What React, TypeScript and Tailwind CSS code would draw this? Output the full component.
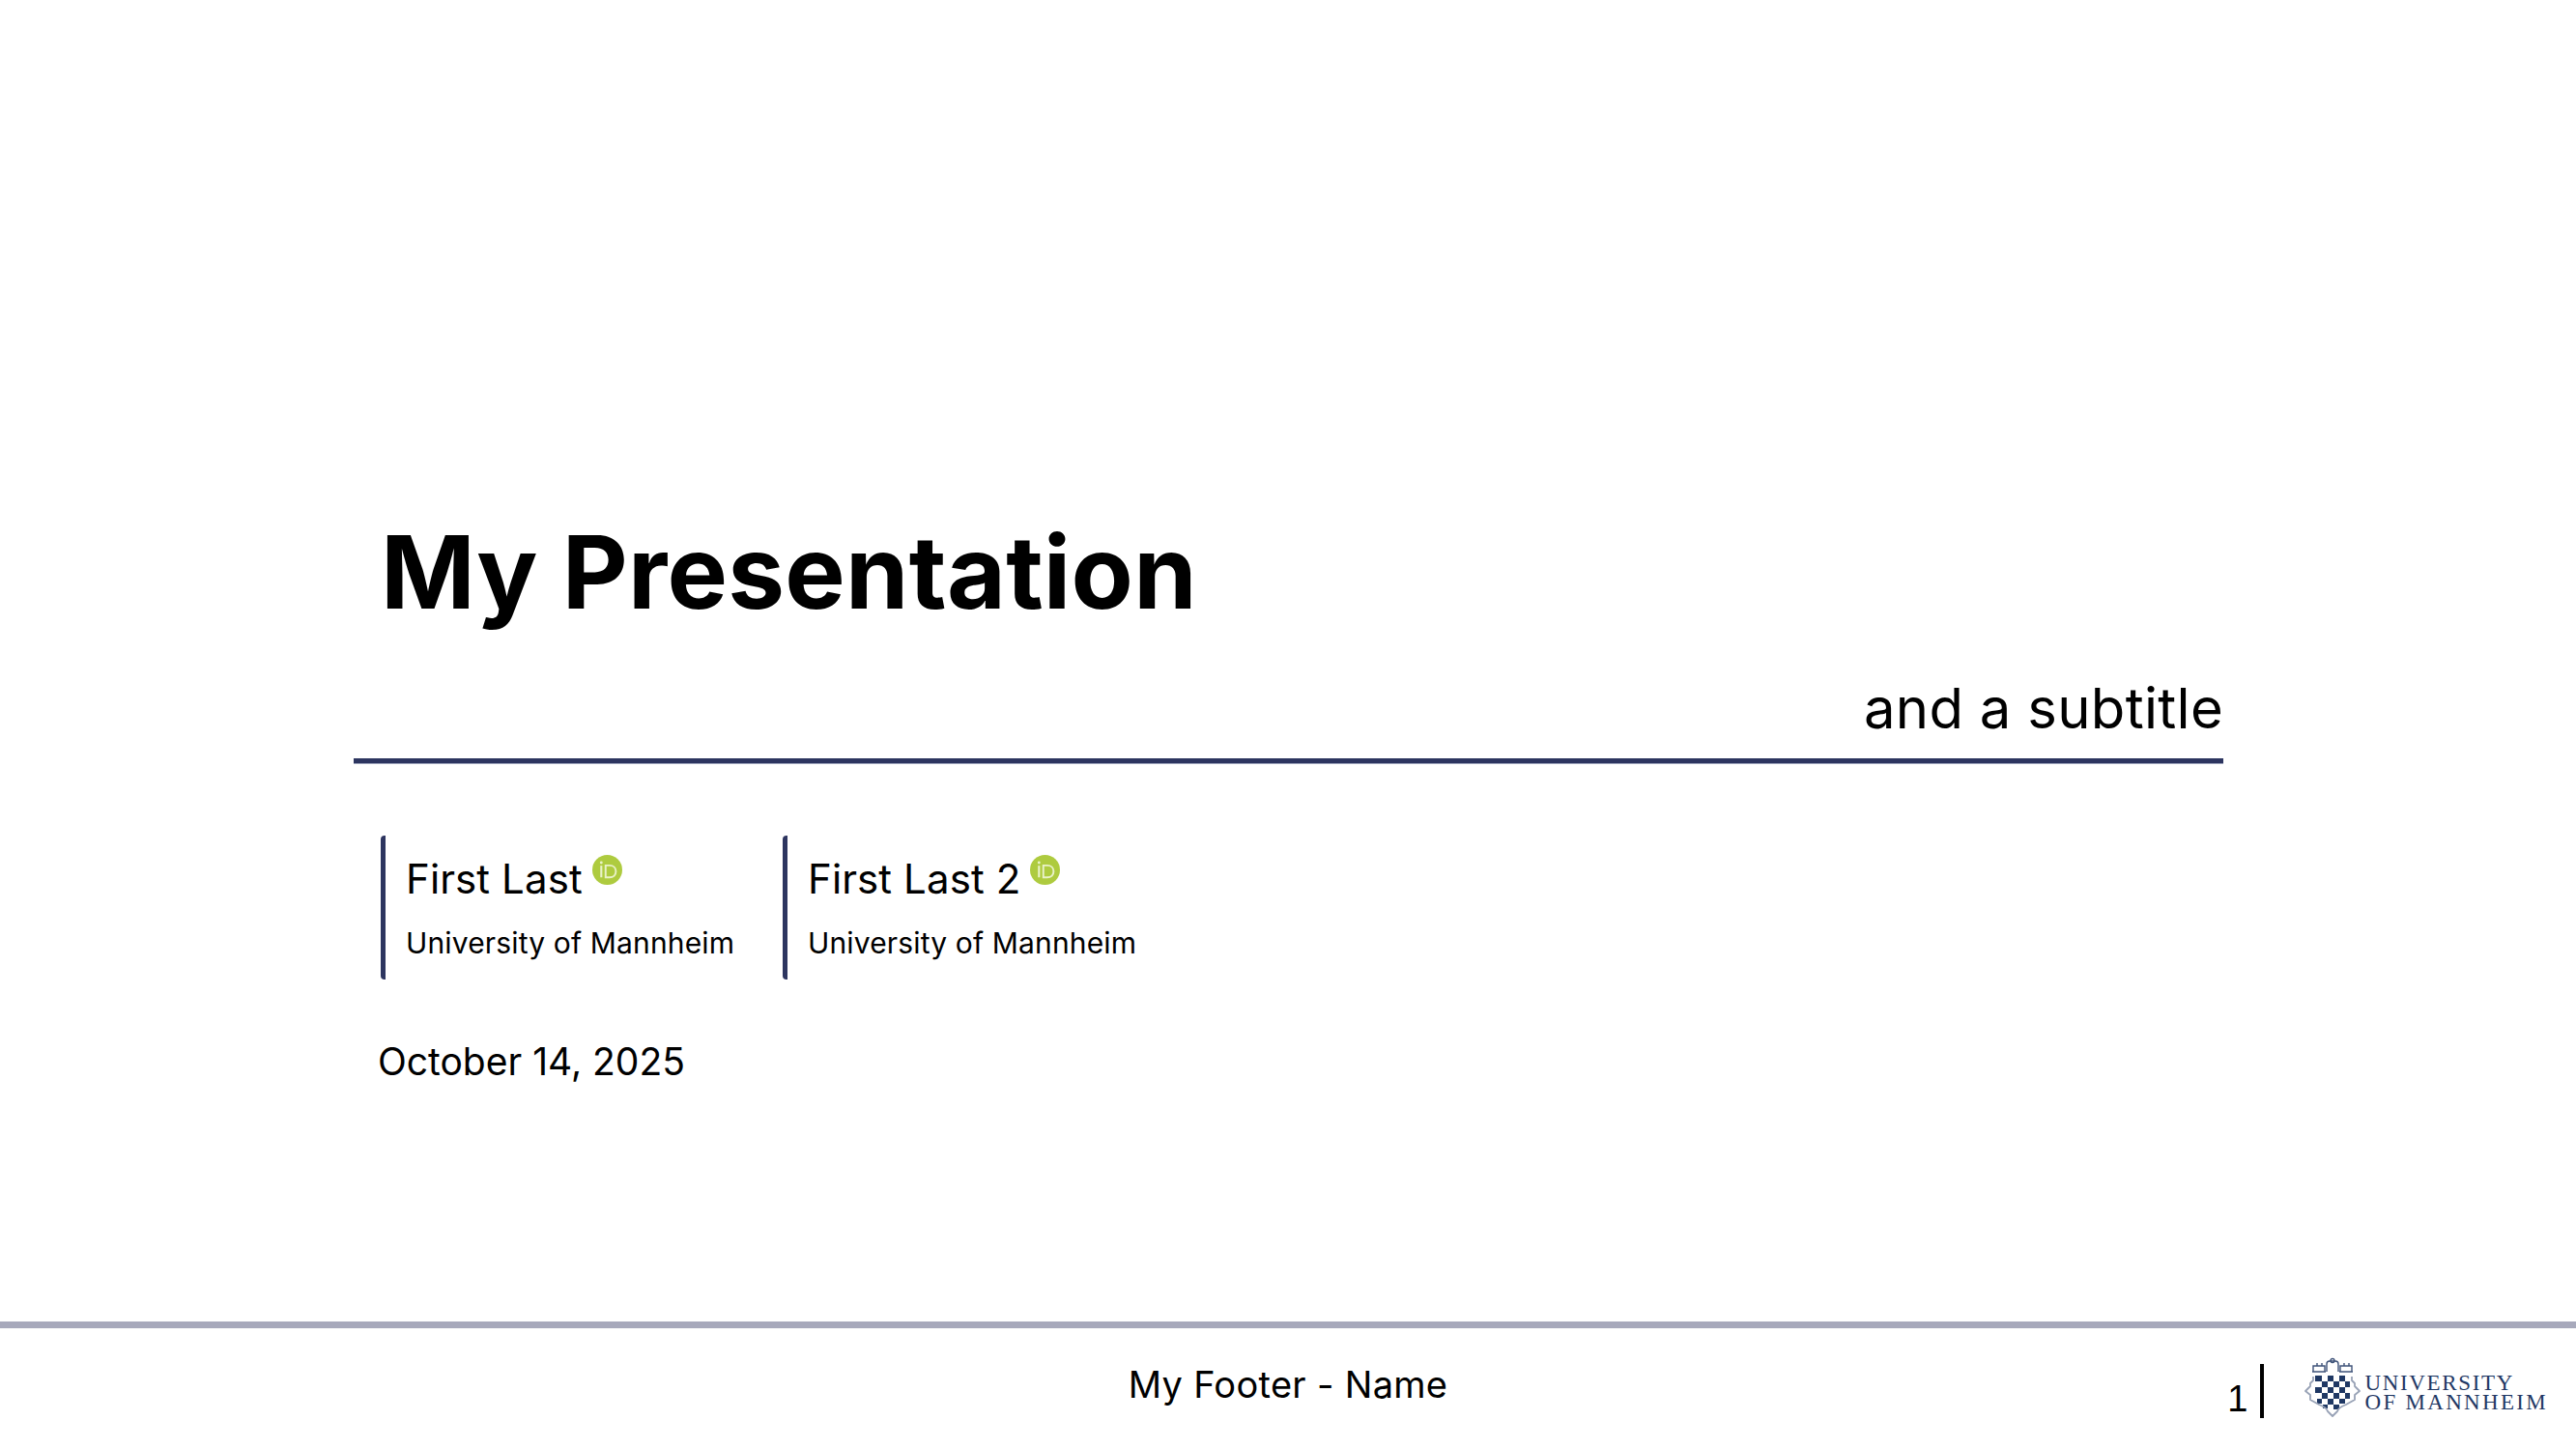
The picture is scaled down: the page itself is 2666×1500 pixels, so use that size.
const Orcid = () => (
  <svg viewBox="0 0 32 32" className="w-[31px] h-[31px] shrink-0">
    <circle cx="16" cy="16" r="16" fill="#aecb3f" />
    <circle cx="9.6" cy="8.2" r="1.5" fill="#e9f2c8" />
    <rect x="8.5" y="11.5" width="2.2" height="12.5" fill="#e9f2c8" />
    <path d="M14.2 11.2 v12.8 h4.2 c4.2 0 6.8-2.8 6.8-6.4 s-2.6-6.4-6.8-6.4 z" fill="none" stroke="#e9f2c8" strokeWidth="2" />
  </svg>
);

const Shield = () => (
  <svg viewBox="0 0 62 64" className="w-[62px] h-[64px] shrink-0">
    <g fill="none" stroke="#3f5379" strokeWidth="1.4">
      <path d="M11 15 v-6 h12 v6 M10 15 h14 M15 9 v-3 M20 9 v-3" />
      <path d="M39 15 v-6 h12 v6 M38 15 h14 M43 9 v-3 M48 9 v-3" />
      <path d="M25 15 v-8 q0-3 3-3 h6 q3 0 3 3 v8" />
      <circle cx="31" cy="3.5" r="2" />
    </g>
    <path d="M13 19 h36 v26 q-4 6-18 10 q-14-4-18-10 z" fill="#ffffff" />
    <g fill="#1f3864">
      <rect x="13" y="19" width="7" height="6" /><rect x="26" y="19" width="6" height="6" /><rect x="38" y="19" width="6" height="6" />
      <rect x="20" y="25" width="6" height="6" /><rect x="32" y="25" width="6" height="6" /><rect x="44" y="25" width="5" height="6" />
      <rect x="13" y="31" width="7" height="6" /><rect x="26" y="31" width="6" height="6" /><rect x="38" y="31" width="6" height="6" />
      <rect x="20" y="37" width="6" height="6" /><rect x="32" y="37" width="6" height="6" /><rect x="44" y="37" width="5" height="6" />
      <rect x="15" y="43" width="5" height="5" /><rect x="26" y="43" width="6" height="6" /><rect x="38" y="43" width="6" height="5" />
      <rect x="21" y="49" width="5" height="4" /><rect x="32" y="49" width="6" height="5" />
    </g>
    <path d="M11 20 v4 l-3 3 v3 l-5 5 l5 4 v5 l9 5 q8 3 9 7 l5 5 l5-5 q1-4 9-7 l9-5 v-5 l5-4 l-5-5 v-3 l-3-3 v-4" fill="none" stroke="#98a2b6" strokeWidth="1.8" strokeLinejoin="round" />
  </svg>
);

const Author = ({ name }: { name: string }) => (
  <div className="flex flex-col w-[416px] h-[149px] border-l-[5px] border-[#2d3560] rounded-l-[4px] pl-[21px]">
    <div className="flex items-start mt-[19px] h-[52px]">
      <span className="text-[42px] leading-[52px] tracking-[0.1px]">{name}</span>
      <span className="ml-[10px] mt-[1px]"><Orcid /></span>
    </div>
    <div className="text-[30px] leading-[40px] mt-[20px] tracking-[0.15px]">University of Mannheim</div>
  </div>
);

export default function App() {
  return (
    <div className="w-[2666px] h-[1500px] bg-white text-black flex flex-col overflow-hidden font-['Inter',sans-serif]">
      <main className="flex-1 flex flex-col pl-[366px] pr-[365px] pt-[530px]">
        <h1 className="pl-[28px] text-[105px] leading-[124px] font-bold tracking-[0.25px]">My Presentation</h1>
        <div className="text-right text-[58px] leading-[68px] mt-[45px] tracking-[0.3px]">and a subtitle</div>
        <div className="h-[6px] bg-[#2d3560] border-b-[1px] border-[#9aa0b8] mt-[18px]" />
        <div className="flex mt-[74px] pl-[28px]">
          <Author name="First Last" />
          <Author name="First Last 2" />
        </div>
        <div className="pl-[25px] mt-[60px] text-[39px] leading-[50px]">October 14, 2025</div>
      </main>
      <footer className="h-[132px] border-t-[7px] border-[#a7a9bb] relative flex justify-center">
        <div className="text-[38px] leading-[50px] mt-[33px] tracking-[0.3px]">My Footer - Name</div>
        <div className="absolute right-[29px] top-[30px] flex items-start">
          <span className="text-[38px] leading-[46px] mt-[20px] font-['Liberation_Sans',sans-serif]">1</span>
          <div className="w-[4px] h-[56px] bg-black ml-[13px] mt-[7px]" />
          <div className="ml-[40px]"><Shield /></div>
          <div className="font-['Liberation_Serif',serif] text-[#1f3864] ml-[2px] mt-[17px] text-[23px] leading-[20px]">
            <div className="tracking-[1.65px]">UNIVERSITY</div>
            <div className="tracking-[2.3px]">OF MANNHEIM</div>
          </div>
        </div>
      </footer>
    </div>
  );
}
